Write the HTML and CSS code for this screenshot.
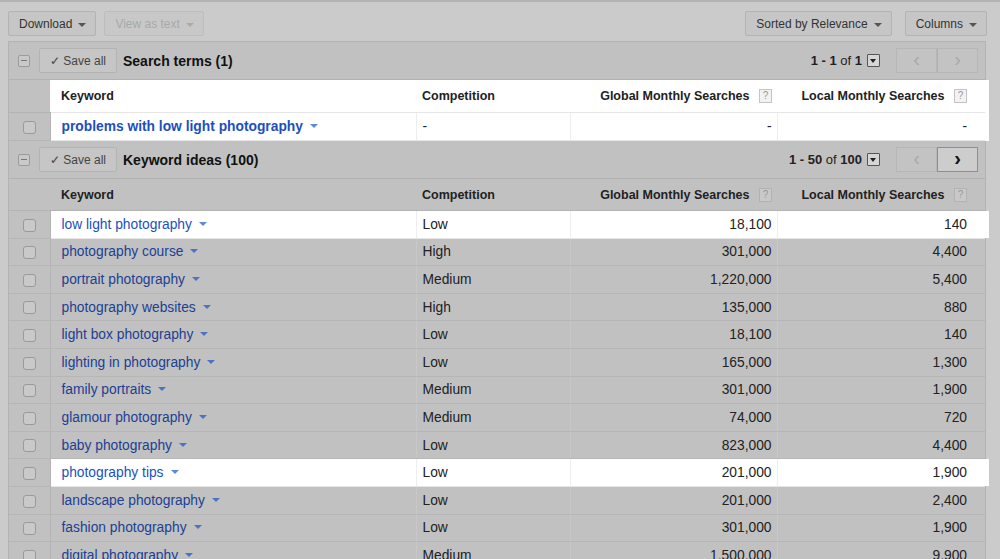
FILE: index.html
```html
<!DOCTYPE html>
<html lang="en">
  <head>
    <meta charset="UTF-8" />
    <title>Keyword ideas</title>
    <link rel="stylesheet" href="styles.css">
  </head>
  <body>
    <div class="toolbar">
      <div class="tools">
        <button class="btn">Download <span class="caret"></span></button>
        <button class="btn" disabled>View as text <span class="caret"></span></button>
      </div>
      <div class="tools">
        <button class="btn">Sorted by Relevance <span class="caret"></span></button>
        <button class="btn btn-cols">Columns <span class="caret"></span></button>
      </div>
    </div>

    <div class="panel">
      <div class="section-head">
        <span class="collapse"></span>
        <button class="btn save">&#10003; Save all</button>
        <h2>Search terms (1)</h2>
        <div class="pager">
          <span class="count"><b>1 - 1</b> of <b>1</b></span>
          <span class="pick"></span>
          <div class="nav-group">
            <button class="nav" disabled>&lsaquo;</button>
            <button class="nav" disabled>&rsaquo;</button>
          </div>
        </div>
      </div>
      <table class="grid">
        <colgroup>
          <col class="c-check"><col class="c-kw"><col class="c-comp"><col class="c-global"><col class="c-local">
        </colgroup>
        <tr class="head lit">
          <th></th>
          <th>Keyword</th>
          <th>Competition</th>
          <th class="num">Global Monthly Searches <span class="help">?</span></th>
          <th class="num last">Local Monthly Searches <span class="help">?</span></th>
        </tr>
        <tr class="lit term">
          <td><span class="box"></span></td>
          <td><a href="#" class="kw strong">problems with low light photography</a><span class="arrow"></span></td>
          <td>-</td>
          <td class="num">-</td>
          <td class="num last">-</td>
        </tr>
      </table>

      <div class="section-head">
        <span class="collapse"></span>
        <button class="btn save">&#10003; Save all</button>
        <h2>Keyword ideas (100)</h2>
        <div class="pager">
          <span class="count"><b>1 - 50</b> of <b>100</b></span>
          <span class="pick"></span>
          <div class="nav-group">
            <button class="nav" disabled>&lsaquo;</button>
            <button class="nav on">&rsaquo;</button>
          </div>
        </div>
      </div>
      <table class="grid">
        <colgroup>
          <col class="c-check"><col class="c-kw"><col class="c-comp"><col class="c-global"><col class="c-local">
        </colgroup>
        <tr class="head">
          <th></th>
          <th>Keyword</th>
          <th>Competition</th>
          <th class="num">Global Monthly Searches <span class="help">?</span></th>
          <th class="num last">Local Monthly Searches <span class="help">?</span></th>
        </tr>
        <tbody id="ideas"></tbody>
      </table>
    </div>

    <script>
      const ideas = [
        ["low light photography", "Low", "18,100", "140", true],
        ["photography course", "High", "301,000", "4,400"],
        ["portrait photography", "Medium", "1,220,000", "5,400"],
        ["photography websites", "High", "135,000", "880"],
        ["light box photography", "Low", "18,100", "140"],
        ["lighting in photography", "Low", "165,000", "1,300"],
        ["family portraits", "Medium", "301,000", "1,900"],
        ["glamour photography", "Medium", "74,000", "720"],
        ["baby photography", "Low", "823,000", "4,400"],
        ["photography tips", "Low", "201,000", "1,900", true],
        ["landscape photography", "Low", "201,000", "2,400"],
        ["fashion photography", "Low", "301,000", "1,900"],
        ["digital photography", "Medium", "1,500,000", "9,900"]
      ];

      const body = document.getElementById("ideas");
      ideas.forEach(([kw, comp, global, local, lit]) => {
        const row = document.createElement("tr");
        if (lit) row.className = "lit";
        row.innerHTML =
          '<td><span class="box"></span></td>' +
          '<td><a href="#" class="kw">' + kw + '</a><span class="arrow"></span></td>' +
          "<td>" + comp + "</td>" +
          '<td class="num">' + global + "</td>" +
          '<td class="num last">' + local + "</td>";
        body.appendChild(row);
      });
    </script>
  </body>
</html>
```

FILE: styles.css
```css
body {
  margin: 0;
  background-color: #cbcbcb;
  font-family: "Liberation Sans", Arial, sans-serif;
  color: #222;
  overflow: hidden;
  height: 559px;
}

.toolbar {
  display: flex;
  justify-content: space-between;
  border-top: 2px solid #b1b4b1;
  height: 41px;
  padding: 9px 13px 0 8px;
  box-sizing: border-box;
}

.tools {
  display: flex;
  gap: 8px;
}

.tools .btn-cols {
  margin-left: 5px;
}

.btn {
  height: 25px;
  padding: 0 9px 0 10px;
  background-color: #c6c6c6;
  border: 1px solid #b3b3b3;
  border-radius: 2px;
  font-family: inherit;
  font-size: 12px;
  color: #333;
  display: flex;
  align-items: center;
  gap: 6px;
}

.btn:disabled {
  color: #a8a8a8;
  border-color: #bdbdbd;
  background-color: #c8c8c8;
}

.caret {
  display: inline-block;
  border-left: 4px solid transparent;
  border-right: 4px solid transparent;
  border-top: 4px solid #555;
  margin-top: 2px;
}

.btn:disabled .caret {
  border-top-color: #aaa;
}

.panel {
  width: 978px;
  margin-left: 8px;
  border: 1px solid #b3b3b3;
  border-bottom: none;
  background-color: #c1c1c1;
  box-sizing: border-box;
}

.section-head {
  height: 38px;
  display: flex;
  align-items: center;
  padding-left: 9px;
  border-bottom: 1px solid #b2b2b2;
  box-sizing: border-box;
}

.collapse {
  width: 10px;
  height: 10px;
  border: 1px solid #9c9c9c;
  border-radius: 2px;
  background-color: #c9c9c9;
  position: relative;
}

.collapse::after {
  content: "";
  position: absolute;
  left: 2px;
  right: 2px;
  top: 4px;
  height: 1px;
  background-color: #777;
}

.save {
  margin-left: 9px;
  width: 78px;
  padding: 0 0 0 10px;
  gap: 3px;
  font-size: 12px;
  color: #444;
}

.section-head h2 {
  margin: 0 0 0 6px;
  font-size: 14px;
  font-weight: bold;
  color: #111;
}

.pager {
  margin-left: auto;
  display: flex;
  align-items: center;
  padding-right: 7px;
}

.count {
  font-size: 13px;
  color: #222;
}

.count b {
  font-weight: bold;
}

.pick {
  width: 11px;
  height: 11px;
  margin-left: 5px;
  border: 1px solid #555;
  border-radius: 1px;
  background-color: #d6d6d6;
  position: relative;
}

.pick::after {
  content: "";
  position: absolute;
  left: 2px;
  top: 4px;
  border-left: 3.5px solid transparent;
  border-right: 3.5px solid transparent;
  border-top: 4px solid #222;
}

.nav-group {
  display: flex;
  margin-left: 16px;
}

.nav {
  width: 41px;
  height: 25px;
  border: 1px solid #b7b7b7;
  background-color: #c3c3c3;
  color: #a9a9a9;
  font-family: inherit;
  font-size: 20px;
  line-height: 20px;
  padding: 0 0 3px;
}

.nav + .nav {
  border-left-color: #b0b0b0;
}

.nav.on {
  color: #111;
  font-weight: bold;
  border-color: #8f8f8f;
  background-color: #cdcdcd;
}

.grid {
  width: 976px;
  border-collapse: collapse;
  table-layout: fixed;
  font-size: 13.8px;
}

.c-check { width: 41px; }
.c-kw { width: 366px; }
.c-comp { width: 154px; }
.c-global { width: 207px; }
.c-local { width: 208px; }

.grid th {
  height: 31px;
  text-align: left;
  font-size: 12.5px;
  font-weight: bold;
  color: #222;
  padding: 0 0 0 11px;
  border-bottom: 1px solid #b3b3b3;
}

.grid td {
  height: 27.6px;
  padding: 0 0 0 11px;
  border-bottom: 1px solid #b6b6b6;
  border-left: 1px solid #c8c8c8;
  box-sizing: border-box;
  white-space: nowrap;
}

.grid td:first-child {
  border-left: none;
  padding: 0;
  text-align: center;
  border-right: 1px solid #b4b4b4;
}

.grid td:nth-child(3),
.grid th:nth-child(3) {
  padding-left: 6px;
}

.grid .num {
  text-align: right;
  padding: 0 5px 0 0;
}

.grid .num.last {
  padding-right: 18px;
}

.term td {
  height: 28px;
}

.head.lit th {
  height: 32px;
}

.lit th:not(:first-child),
.lit td:not(:first-child) {
  background-color: #fff;
  border-left-color: #eee;
  border-bottom-color: #e6e6e6;
}

.lit .last {
  box-shadow: 4px 0 0 #fff;
}

.help {
  display: inline-block;
  width: 11px;
  height: 12px;
  margin-left: 6px;
  border: 1px solid #c4c4c4;
  background-color: #f2f2f2;
  color: #999;
  font-size: 10px;
  font-weight: normal;
  line-height: 12px;
  text-align: center;
  vertical-align: 1px;
}

.head:not(.lit) .help {
  background-color: #c9c9c9;
  border-color: #b2b2b2;
  color: #999;
}

.box {
  display: inline-block;
  width: 11px;
  height: 11px;
  border: 1px solid #9a9a9a;
  border-radius: 3px;
  background-color: #c9c9c9;
  vertical-align: middle;
}

.kw {
  color: #203f93;
  text-decoration: none;
}

.lit .kw {
  color: #1c4fbd;
}

.kw.strong {
  font-weight: bold;
}

.arrow {
  display: inline-block;
  margin-left: 7px;
  border-left: 4px solid transparent;
  border-right: 4px solid transparent;
  border-top: 4px solid #4a73c4;
  vertical-align: 3px;
}

.lit .arrow {
  border-top-color: #5a8ad8;
}
```
